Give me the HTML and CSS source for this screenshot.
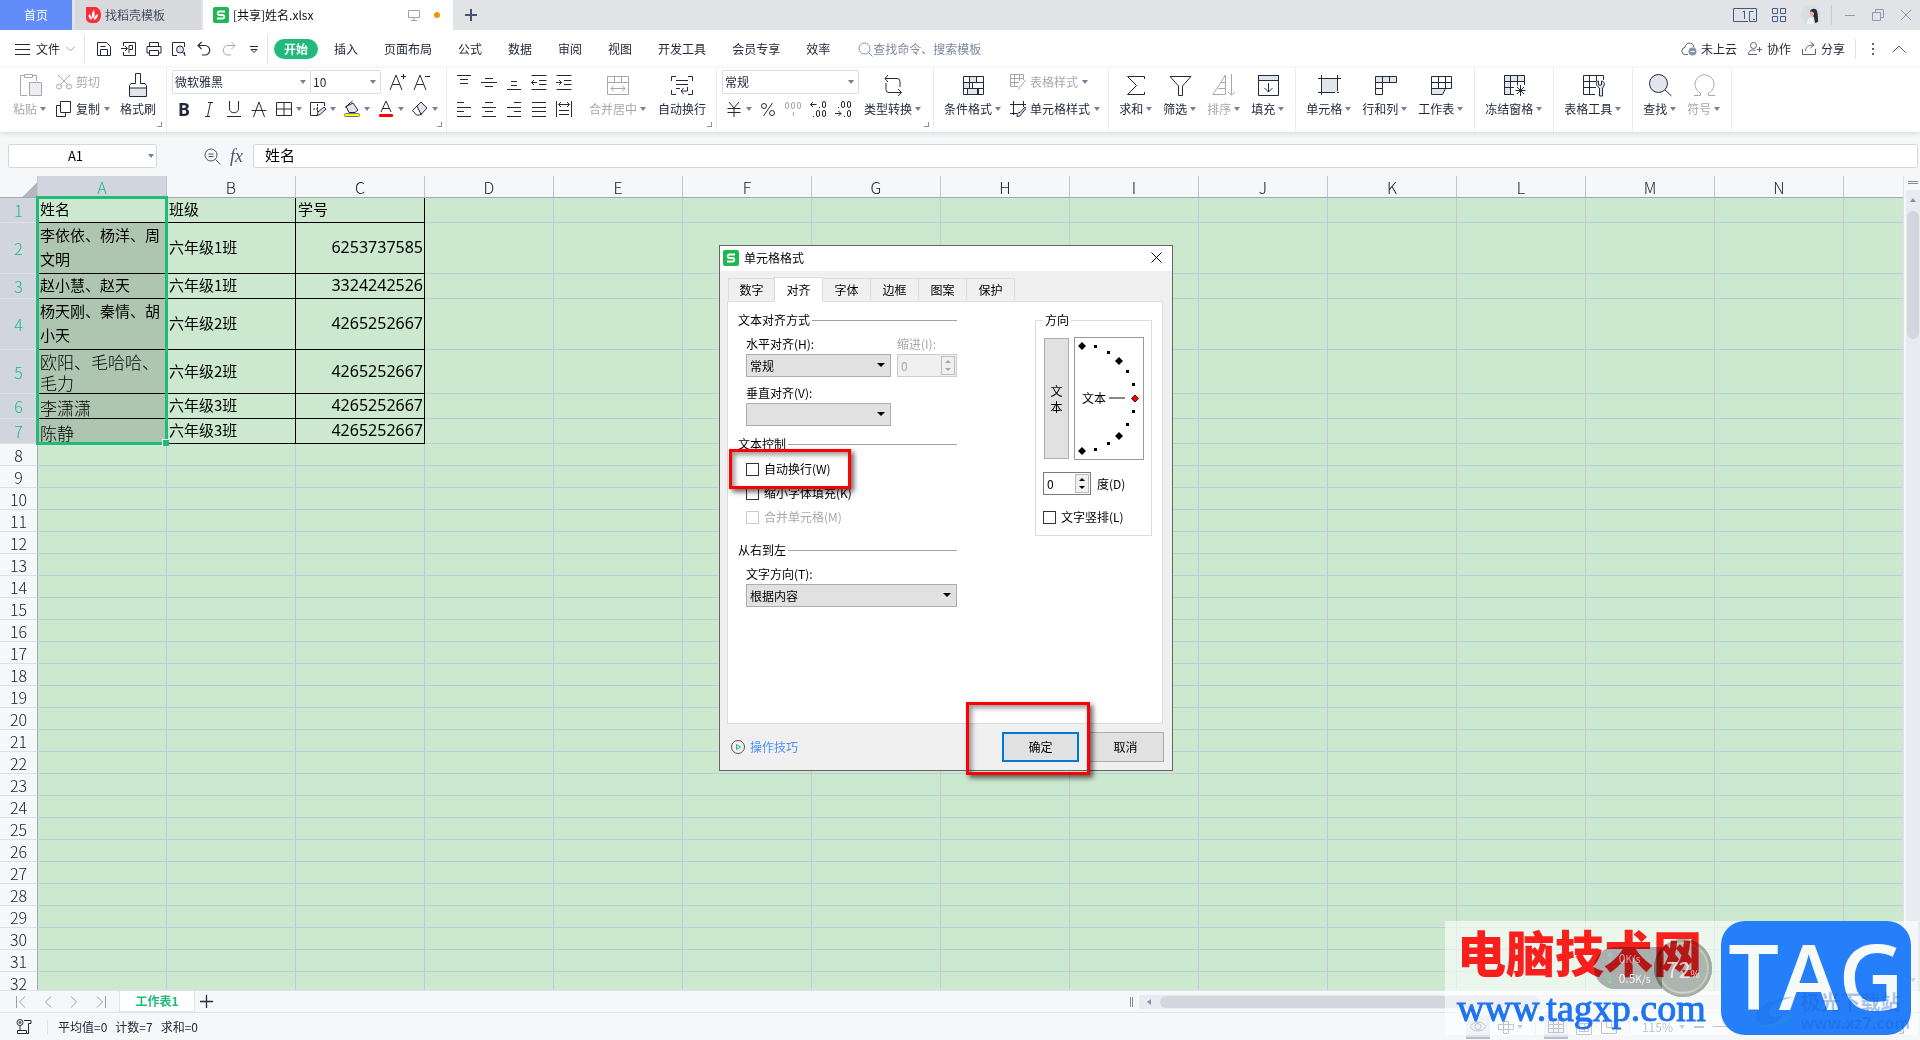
FILE: index.html
```html
<!DOCTYPE html>
<html lang="zh-CN">
<head>
<meta charset="utf-8">
<title>[共享]姓名.xlsx</title>
<link rel="stylesheet" href="styles.css">
</head>
<body>
<div class="app">

<header class="titlebar">
  <button class="tab tab-home">首页</button>
  <button class="tab tab-docer">
    <svg class="logo" viewBox="0 0 16 16"><path d="M1 0h9a6 8 0 0 1 0 16H6a5 5 0 0 1-5-5z" fill="#fb2b37"/><path d="M7 13C4 12 3 10 4 7c2 1 3 3 3 6M8 12C6 8 7 5 9 3c1 3 1 6-1 9M9 13c0-3 1-5 4-6 0 3-1 5-4 6" fill="#fff"/></svg>
    找稻壳模板</button>
  <button class="tab tab-file">
    <svg class="logo" viewBox="0 0 16 16"><rect width="16" height="16" rx="2" fill="#1eb853"/><path d="M12 4.500H6.500a1.700 1.700 0 0 0 0 3.500h3a1.700 1.700 0 0 1 0 3.500H4" fill="none" stroke="#fff" stroke-width="1.800"/></svg>
    <span class="grow">[共享]姓名.xlsx</span>
    <svg class="s12 muted" viewBox="0 0 12 12"><path d="M.5 1.500h11v7H.5zM6 8.500v3M3 11.500h6"/></svg>
    <i class="dot"></i></button>
  <button class="tab-new" aria-label="新建"><svg class="s12" viewBox="0 0 12 12"><path d="M6 0v12M0 6h12" stroke-width="2"/></svg></button>
  <span class="grow"></span>
  <div class="win">
    <svg width="24" height="14" viewBox="0 0 24 14"><path d="M15 13.500H.5V.5h23v13H16.500V3.500h4M9.500 4l2-1v8M20 11.500h2"/></svg>
    <svg width="14" height="14" viewBox="0 0 14 14"><path d="M.5.500h5v5h-5zM8.500.5h5v5h-5zM.5 8.500h5v5h-5zM8.500 8.500h5v5h-5z"/></svg>
    <svg width="20" height="20" viewBox="0 0 20 20" class="avatar"><circle cx="10" cy="10" r="10" fill="#d3dfe4"/><path d="M9 6c2-3 6-3 7 0s1 7 1 11l-3 1-1-6-3-2z" fill="#33272b"/><path d="M9 7c2-1 4 0 4 2s-2 3-3 2z" fill="#e6b9a5"/><path d="M6 19c0-5 3-7 6-6l1 6z" fill="#eef2f4"/></svg>
    <i class="wsep"></i>
    <svg class="s12 pale" viewBox="0 0 12 12"><path d="M1 6.500h10"/></svg>
    <svg class="s12 pale" viewBox="0 0 12 12"><path d="M.5 3.500h8v8h-8zM3.500 3V.5h8v8H9"/></svg>
    <svg class="s12 pale" viewBox="0 0 12 12"><path d="M1 1l10 10M11 1L1 11"/></svg>
  </div>
</header>

<nav class="menubar">
  <button class="file"><svg width="15" height="12" viewBox="0 0 15 12"><path d="M0 1.500h15M0 6.500h15M0 11.500h15"/></svg>文件<svg width="9" height="6" class="muted" viewBox="0 0 9 6"><path d="M0 .5l4.500 4.500L9 .5"/></svg></button>
  <i class="sep"></i>
  <div class="quick">
    <button aria-label="保存"><svg class="s16" viewBox="0 0 16 16"><path d="M1.500 1.500h9l4 4v9h-13zM4.500 14V8.500h7V14M4.500 5.500h5"/></svg></button>
    <button aria-label="输出为PDF"><svg class="s16" viewBox="0 0 16 16"><path d="M2.500 5V1.500h12v13h-12V11M0 7.500h6M4 5l2.500 2.500L4 10M8 12V4.500h3.500v4H8"/></svg></button>
    <button aria-label="打印"><svg class="s16" viewBox="0 0 16 16"><path d="M3.500 5V1.500h9V5M3.500 12H1V5.500h14V12h-2.500M3.500 9.500h9v5h-9z"/></svg></button>
    <button aria-label="打印预览"><svg class="s16" viewBox="0 0 16 16"><path d="M6 14.500H1.500v-13h12V6M13.500 11v3.500"/><circle cx="9" cy="8.500" r="3.500" fill="#dfe3ec"/><path d="M11.500 11l3 3.500"/></svg></button>
    <button aria-label="撤销"><svg class="s16" viewBox="0 0 16 16"><path d="M5.500 1L2 4.500 5.500 8M2 4.500h7a4.500 4.500 0 0 1 0 9.500H6" stroke-width="1.200"/></svg></button>
    <button aria-label="恢复" class="off"><svg class="s16" viewBox="0 0 16 16"><path d="M10.500 1L14 4.500 10.500 8M14 4.500H7a4.500 4.500 0 0 0 0 9.500h3"/></svg></button>
    <button aria-label="更多"><svg class="s16" viewBox="0 0 16 16"><path d="M4 5.500h8M5 8.500l3 3 3-3z"/></svg></button>
  </div>
  <i class="sep"></i>
  <button class="pill">开始</button>
  <div class="menus">
    <button>插入</button><button>页面布局</button><button>公式</button><button>数据</button><button>审阅</button><button>视图</button><button>开发工具</button><button>会员专享</button><button>效率</button>
  </div>
  <label class="search"><svg width="15" height="15" viewBox="0 0 15 15"><circle cx="6.500" cy="6.500" r="5.500"/><path d="M10.500 10.500l4 4"/></svg><input placeholder="查找命令、搜索模板" aria-label="查找命令"></label>
  <span class="grow"></span>
  <div class="share">
    <button><svg class="s16" viewBox="0 0 16 16"><path d="M7 13.500H4.500a3.500 3.500 0 0 1-.5-7 4.500 4.500 0 0 1 9 0"/><circle cx="11.500" cy="10.500" r="4" fill="#8b94a8" stroke="none"/><path d="M9.500 10.500h4" stroke="#fff"/></svg>未上云</button>
    <button><svg class="s16" viewBox="0 0 16 16"><circle cx="6.500" cy="4.500" r="3"/><path d="M10 13.500H1.500c0-3 1.500-4.500 4-4.500 1 0 2 0 3 .5M12.500 6v5M10 8.500h5"/></svg>协作</button>
    <button><svg class="s16" viewBox="0 0 16 16"><path d="M1.500 8v5.500h13V8M4.500 10c0-4 3-6 8-6M9.500 1l3.500 3-3.500 3"/></svg>分享</button>
    <i class="sep"></i>
    <svg width="4" height="14" viewBox="0 0 4 14" class="dots"><path d="M1 1h2v2H1zM1 6h2v2H1zM1 11h2v2H1z"/></svg>
    <svg width="14" height="8" viewBox="0 0 14 8"><path d="M.5 7.500L7 1l6.500 6.500"/></svg>
  </div>
</nav>

<section class="ribbon">
  <div class="group g-clip">
    <button class="big off"><svg class="s24" viewBox="0 0 24 24"><path d="M9 22.500H2.500v-20H6M15 2.500h3.500V8M6.500 1.500h8v3h-8z"/><path d="M11.500 9.500h12v13h-12z" fill="#eceef2"/></svg><span>粘贴<b class="ar"></b></span></button>
    <div class="two clipcol">
      <button class="line off"><svg class="s16" viewBox="0 0 16 16"><circle cx="3" cy="12.500" r="2.500"/><circle cx="13" cy="12.500" r="2.500"/><path d="M2 1l9.500 9.500M14 1l-9.500 9.500"/></svg>剪切</button>
      <button class="line"><svg class="s16" viewBox="0 0 16 16"><path d="M4.500.500h10v11h-10zM4 4.500H.5v11h9V12"/></svg>复制<b class="ar"></b></button>
    </div>
    <button class="big"><svg class="s24" viewBox="0 0 24 24"><path d="M3.500 15v8.500h17V15z" fill="#e2e5ec"/><path d="M3.500 15v-2.500L5 10.500h4.500V.5h5v10H19l1.500 2V15"/></svg><span>格式刷</span></button>
    <i class="corner"></i>
  </div>

  <div class="group g-font">
    <div class="two">
      <div class="row">
        <div class="joined"><span class="sel w-font"><select aria-label="字体"><option>微软雅黑</option></select></span><span class="sel w-size"><select aria-label="字号"><option>10</option></select></span></div>
        <div class="row sized">
        <button aria-label="增大字号"><svg class="s18" viewBox="0 0 18 18"><path d="M1 17L7 2l6 15M3.500 11.500h7M12 3.500h5M14.500 1v5"/></svg></button>
        <button aria-label="减小字号"><svg class="s18" viewBox="0 0 18 18"><path d="M1 17L7 2l6 15M3.500 11.500h7M12 3.500h5"/></svg></button></div>
      </div>
      <div class="row tools">
        <button class="bold">B</button>
        <button aria-label="斜体"><svg class="s18" viewBox="0 0 18 18"><path d="M8 2.500h5M5 16.500h5M10.500 2.500l-3 14"/></svg></button>
        <button aria-label="下划线"><svg class="s18" viewBox="0 0 18 18"><path d="M4.500 1v8c0 5 9 5 9 0V1M2 16.500h14"/></svg></button>
        <button aria-label="删除线"><svg class="s18" viewBox="0 0 18 18"><path d="M3.500 17L9 2l5.500 15M1.500 10.500h15"/></svg></button>
        <button class="dd" aria-label="边框"><svg class="s18" viewBox="0 0 18 18"><path d="M1.500 2.500h15v13h-15zM9 2.500v13M1.500 9h15"/></svg><b class="ar"></b></button>
        <button class="dd" aria-label="绘图边框"><svg class="s18" viewBox="0 0 18 18"><path d="M8 15.500H1.500v-13h14V6"/><path d="M4 9h6M8.500 4v8" stroke-dasharray="2 1"/><path d="M8 15.500l1-3.500 6-5 2 2-6 5.500z" fill="#e2e5ec"/></svg><b class="ar"></b></button>
        <button class="dd" aria-label="填充颜色"><svg class="s18" viewBox="0 0 18 18"><path d="M3 6.500L10 3l5 7-3 2.500H6z" fill="#e2e5ec"/><path d="M2 7.500L9.500 1"/><rect x="1.500" y="13.500" width="15" height="3" rx="1" fill="#ff0" stroke="#777"/></svg><b class="ar"></b></button>
        <button class="dd" aria-label="字体颜色"><svg class="s18" viewBox="0 0 18 18"><path d="M4 12L9 1l5 11M5.500 8.500h7"/><rect x="2" y="14" width="14" height="3" rx="1" fill="red" stroke="none"/></svg><b class="ar"></b></button>
        <button class="dd" aria-label="清除"><svg class="s18" viewBox="0 0 18 18"><path d="M6 6l4-4 6 6-6 6.500z" fill="#e2e5ec"/><path d="M6 6l-4.500 4.500 4 4.500H9l2-1.500"/></svg><b class="ar"></b></button>
      </div>
    </div>
    <i class="corner"></i>
  </div>

  <div class="group g-align">
    <div class="two">
      <div class="row tools0">
        <button aria-label="顶端对齐"><svg class="s18" viewBox="0 0 18 18"><path d="M2 2.500h14M5 6.500h8M5 10.500h8"/></svg></button>
        <button aria-label="垂直居中"><svg class="s18" viewBox="0 0 18 18"><path d="M5 5.500h8M1 9.500h16M5 13.500h8"/></svg></button>
        <button aria-label="底端对齐"><svg class="s18" viewBox="0 0 18 18"><path d="M6 8.500h6M6 12.500h6M2 16.500h14"/></svg></button>
        <button aria-label="减少缩进"><svg class="s18" viewBox="0 0 18 18"><path d="M1.500 2.500h15M9 7.500h7.500M9 11.500h7.500M1.500 16.500h15M1.500 9.500H7M4 7L1.500 9.500 4 12"/></svg></button>
        <button aria-label="增加缩进"><svg class="s18" viewBox="0 0 18 18"><path d="M1.500 2.500h15M9 7.500h7.500M9 11.500h7.500M1.500 16.500h15M1 9.500h5.500M4 7l2.500 2.500L4 12"/></svg></button>
      </div>
      <div class="row tools0">
        <button aria-label="左对齐"><svg class="s18" viewBox="0 0 18 18"><path d="M2 2.500h7M2 7.500h14M2 11.500h7M2 16.500h14"/></svg></button>
        <button aria-label="居中"><svg class="s18" viewBox="0 0 18 18"><path d="M5 2.500h8M2 7.500h14M5 11.500h8M2 16.500h14"/></svg></button>
        <button aria-label="右对齐"><svg class="s18" viewBox="0 0 18 18"><path d="M9 2.500h7M2 7.500h14M9 11.500h7M2 16.500h14"/></svg></button>
        <button aria-label="两端对齐"><svg class="s18" viewBox="0 0 18 18"><path d="M2 2.500h14M2 7.500h14M2 11.500h14M2 16.500h14"/></svg></button>
        <button aria-label="分散对齐"><svg class="s18" viewBox="0 0 18 18"><path d="M1.500 1v16M16.500 1v16M4 4.500h10M6 2L3.500 4.500 6 7M12 2l2.500 2.500L12 7M4 10.500h10M4 14.500h10"/></svg></button>
      </div>
    </div>
    <button class="big off"><svg class="s24" viewBox="0 0 24 24"><path d="M1.500 3.500h21v18h-21zM1.500 9.500h21M8.500 3.500v6M15.500 3.500v6M5 15.500h14M8 12.500l-3 3 3 3M16 12.500l3 3-3 3"/></svg><span>合并居中<b class="ar"></b></span></button>
    <button class="big"><svg class="s24" viewBox="0 0 24 24"><path d="M6 3.500H1.500V8M18 3.500h4.500V8M1.500 17v4.500H6M22.500 17v4.500H18M6 7.500h12M6 11.500h12M6 15.500h4M17.500 14v4H11M13.500 15L11 18l2.500 3"/></svg><span>自动换行</span></button>
    <i class="corner"></i>
  </div>

  <div class="group g-num">
    <div class="two">
      <div class="row"><span class="sel w-num"><select aria-label="数字格式"><option>常规</option></select></span></div>
      <div class="row tools">
        <button class="dd" aria-label="货币"><svg class="s18" viewBox="0 0 18 18"><path d="M4 2l5 6 5-6M2.500 8.500h13M2.500 12.500h13M9 8v9"/></svg><b class="ar"></b></button>
        <button aria-label="百分比"><svg class="s18" viewBox="0 0 18 18"><circle cx="5" cy="6" r="2.500"/><circle cx="13" cy="13" r="2.500"/><path d="M13.500 3l-9 13"/></svg></button>
        <button class="off" aria-label="千位分隔"><svg class="s18" viewBox="0 0 18 18"><rect x="1.500" y="2.500" width="3" height="6" rx="1.500"/><rect x="7.500" y="2.500" width="3" height="6" rx="1.500"/><rect x="13.500" y="2.500" width="3" height="6" rx="1.500"/><path d="M9.500 12v3L8.500 16"/></svg></button>
        <button aria-label="增加小数位"><svg class="s18" viewBox="0 0 18 18"><rect x="13.500" y="1.500" width="3" height="6" rx="1.500"/><path d="M10.500 7v1M1.500 4.500h6M4 2L1.500 4.500 4 7M4.500 16v1"/><rect x="7.500" y="10.500" width="3" height="6" rx="1.500"/><rect x="13.500" y="10.500" width="3" height="6" rx="1.500"/></svg></button>
        <button aria-label="减少小数位"><svg class="s18" viewBox="0 0 18 18"><rect x="7.500" y="1.500" width="3" height="6" rx="1.500"/><rect x="13.500" y="1.500" width="3" height="6" rx="1.500"/><path d="M4.500 7v1M1 13.500h6M4.500 11L7 13.500 4.500 16M10.500 16v1"/><rect x="13.500" y="10.500" width="3" height="6" rx="1.500"/></svg></button>
      </div>
    </div>
    <button class="big"><svg class="s24" viewBox="0 0 24 24"><path d="M7 2L4 5.500 7 9M4 5.500h12a3 3 0 0 1 3 3V14M5 10v6.500a3 3 0 0 0 3 3h12M17 16l3.500 3.500L17 23"/></svg><span>类型转换<b class="ar"></b></span></button>
    <i class="corner"></i>
  </div>

  <div class="group g-style">
    <button class="big"><svg class="s24" viewBox="0 0 24 24"><path d="M2.500 9.500h6v6h-6zM8.500 3.500h7v6h-7zM6.500 15.500h10v6h-10z" fill="#e2e5ec"/><path d="M2.500 3.500h20v18h-20zM2.500 9.500h20M2.500 15.500h20M15.500 3.500v6M11.500 9.500v6M17.500 15.500v6"/></svg><span>条件格式<b class="ar"></b></span></button>
    <div class="two">
      <button class="line off"><svg class="s16" viewBox="0 0 16 16"><path d="M8 12.500H.5V.5h13V6M.5 4.500h13M.5 8.500H9M4.500.500v12M9.500.5V7M9 15.500c0-3 1-3.500 2-3.500l4.500-6"/></svg>表格样式<b class="ar"></b></button>
      <button class="line"><svg class="s16" viewBox="0 0 16 16"><path d="M3.500 0v14M0 3.500h16M13.500 0v6M0 12.500h7"/><path d="M7 15.500c0-3 1-4 3-4L15 6l1 1.500-5 6c0 1.500-2 2-4 2z" fill="#e2e5ec"/></svg>单元格样式<b class="ar"></b></button>
    </div>
  </div>

  <div class="group">
    <button class="big"><svg class="s24" viewBox="0 0 24 24"><path d="M20.500 6V3.500h-17l9 9-9 9h17V19"/></svg><span>求和<b class="ar"></b></span></button>
    <button class="big"><svg class="s24" viewBox="0 0 24 24"><path d="M2 3.500h21L14.500 13v9.500h-4V13z"/></svg><span>筛选<b class="ar"></b></span></button>
    <button class="big off"><svg class="s24" viewBox="0 0 24 24"><path d="M1 21.500L13.500 2v19.500zM9 9.500h4.500M6 15.500h7.500M19.500 1v21M16 19l3.500 3 3.500-3"/></svg><span>排序<b class="ar"></b></span></button>
    <button class="big"><svg class="s24" viewBox="0 0 24 24"><path d="M2.500 2.500h20v5h-20z" fill="#e2e5ec"/><path d="M2.500 2.500h20v20h-20zM12.500 10v9M8.500 15l4 4 4-4"/></svg><span>填充<b class="ar"></b></span></button>
  </div>

  <div class="group">
    <button class="big"><svg class="s24" viewBox="0 0 24 24"><path d="M4 5.500h17v14H4z" fill="#e2e5ec" stroke="none"/><path d="M4.500 2v20M20.500 2v16M1 5.500h23M1 19.500h17M20 19.500h2"/></svg><span>单元格<b class="ar"></b></span></button>
    <button class="big"><svg class="s24" viewBox="0 0 24 24"><path d="M2.500 3.500h21v6h-21z" fill="#e2e5ec"/><path d="M2.500 9.500v12h7v-18M16.500 3.500v6M2.500 15.500h7"/></svg><span>行和列<b class="ar"></b></span></button>
    <button class="big"><svg class="s24" viewBox="0 0 24 24"><path d="M2.500 15.500h14l-3 6h-11z" fill="#e2e5ec"/><path d="M2.500 3.500h20v12h-20zM2.500 9.500h20M9.500 3.500v12M16.500 3.500v12"/></svg><span>工作表<b class="ar"></b></span></button>
  </div>

  <div class="group">
    <button class="big"><svg class="s24" viewBox="0 0 24 24"><path d="M2.500 2.500h20v6h-14v13h-6z" fill="#e2e5ec"/><path d="M22.500 12V2.500h-20v19H12M2.500 8.500h20M2.500 14.500H12M8.500 2.500v19M15.500 2.500v10M18.500 12v11M13.500 17.500h10M15 14l7 7M22 14l-7 7"/></svg><span>冻结窗格<b class="ar"></b></span></button>
  </div>
  <div class="group">
    <button class="big"><svg class="s24" viewBox="0 0 24 24"><path d="M22.500 7V2.500h-20v19H14M2.500 8.500H15M2.500 14.500H15M8.500 2.500v19M15.500 2.500v6"/><path d="M18.500 23v-8c-5-3-3-7-1-7v4h3V8c3 0 4 4 1 7v8z" fill="#e2e5ec"/></svg><span>表格工具<b class="ar"></b></span></button>
  </div>
  <div class="group">
    <button class="big"><svg class="s24" viewBox="0 0 24 24"><circle cx="10.500" cy="10.500" r="9" fill="#e2e5ec"/><path d="M17 17l6.500 6"/></svg><span>查找<b class="ar"></b></span></button>
    <button class="big off"><svg class="s24" viewBox="0 0 24 24"><path d="M2 22.500h6.500V20a9.500 9.500 0 1 1 8 0v2.500H23"/></svg><span>符号<b class="ar"></b></span></button>
  </div>
</section>

<section class="formula">
  <span class="sel name"><input value="A1" aria-label="名称框"></span>
  <span class="fxs"><svg width="17" height="17" viewBox="0 0 17 17"><circle cx="7" cy="7" r="6"/><path d="M11.500 11.500l5 5M4.500 6h5M4.500 8.500h5"/></svg><em>fx</em></span>
  <input class="fin" value="姓名" aria-label="编辑栏">
</section>

<main class="sheet">
  <div class="gridwrap">
    <table class="grid">
      <colgroup><col class="c-head"><col class="c"><col class="c"><col class="c"><col class="c"><col class="c"><col class="c"><col class="c"><col class="c"><col class="c"><col class="c"><col class="c"><col class="c"><col class="c"><col class="c"><col></colgroup>
      <thead><tr><th class="all"></th><th class="on">A</th><th>B</th><th>C</th><th>D</th><th>E</th><th>F</th><th>G</th><th>H</th><th>I</th><th>J</th><th>K</th><th>L</th><th>M</th><th>N</th><th class="end"></th></tr></thead>
      <tbody id="rows">
        <tr class="h25"><th>1</th><td class="d">姓名</td><td class="d">班级</td><td class="d">学号</td></tr>
        <tr class="h51"><th>2</th><td class="d s">李依依、杨洋、周文明</td><td class="d">六年级1班</td><td class="d n">6253737585</td></tr>
        <tr class="h25"><th>3</th><td class="d s">赵小慧、赵天</td><td class="d">六年级1班</td><td class="d n">3324242526</td></tr>
        <tr class="h51"><th>4</th><td class="d s">杨天刚、秦情、胡小天</td><td class="d">六年级2班</td><td class="d n">4265252667</td></tr>
        <tr class="h44"><th>5</th><td class="d s song">欧阳、毛哈哈、毛力</td><td class="d">六年级2班</td><td class="d n">4265252667</td></tr>
        <tr class="h25"><th>6</th><td class="d s song">李潇潇</td><td class="d">六年级3班</td><td class="d n">4265252667</td></tr>
        <tr class="h25"><th>7</th><td class="d s song">陈静</td><td class="d">六年级3班</td><td class="d n">4265252667</td></tr>
      </tbody>
    </table>
    <div class="selection"></div>
  </div>
  <div class="vscroll"><i class="split"></i><div class="vtrack"><b class="up"></b><i class="vthumb"></i><span class="grow"></span><b class="down"></b></div></div>
</main>

<div class="sheetbar">
  <div class="navs">
    <svg width="10" height="12" viewBox="0 0 10 12"><path d="M.5 0v12M9 .5L3.500 6 9 11.500"/></svg>
    <svg width="8" height="12" viewBox="0 0 8 12"><path d="M7 .5L1.500 6 7 11.500"/></svg>
    <svg width="8" height="12" viewBox="0 0 8 12"><path d="M1 .5L6.500 6 1 11.500"/></svg>
    <svg width="10" height="12" viewBox="0 0 10 12"><path d="M9.500 0v12M1 .5L6.500 6 1 11.500"/></svg>
  </div>
  <button class="sheettab">工作表1</button>
  <button class="addsheet" aria-label="新建工作表"><svg width="13" height="13" viewBox="0 0 13 13"><path d="M6.500 0v13M0 6.500h13" stroke-width="1.300"/></svg></button>
  <span class="grow"></span>
  <div class="hscroll"><i class="bars"></i><div class="htrack"><b class="prev"></b><i class="hthumb"></i></div></div>
</div>

<footer class="status">
  <svg class="s16" viewBox="0 0 16 16"><circle cx="4" cy="3.500" r="3"/><circle cx="4" cy="3.500" r="1"/><path d="M8 1.500h7v3h-2.500V13M4 7v4M1.500 11.500h9v3h-9zM12.500 8v6.500h-2"/></svg>
  <i class="sep"></i>
  <span>平均值=0</span><span>计数=7</span><span>求和=0</span>
  <span class="grow"></span>
  <div class="views">
    <button class="lit" aria-label="护眼模式"><svg class="s16" viewBox="0 0 16 16"><path d="M0 8.500c4-6 12-6 16 0-4 6-12 6-16 0z"/><circle cx="8" cy="8.500" r="3"/></svg></button>
    <button class="dd" aria-label="阅读模式"><svg class="s16" viewBox="0 0 16 16"><path d="M5.500 2.500h5v12h-5zM.5 5.500h15v5H.5z"/></svg><b class="ar"></b></button>
    <i class="sep"></i>
    <button class="lit" aria-label="普通视图"><svg class="s16" viewBox="0 0 16 16"><path d="M.5 2.500h15v12H.5zM.5 6.500h15M.5 10.500h15M5.500 2.500v12M10.500 2.500v12"/></svg></button>
    <button aria-label="页面布局"><svg class="s16" viewBox="0 0 16 16"><path d="M.5 1.500h15v14H.5zM3.500 4.500h9v8h-9zM3.500 8.500h9M8.500 4.500v8"/></svg></button>
    <button aria-label="分页预览"><svg class="s16" viewBox="0 0 16 16"><path d="M.5 2.500h15v12H.5zM5.500 2.500v6h10M10.500 2.500v6"/></svg></button>
    <i class="sep"></i>
    <span class="zoomv">115%<b class="ar"></b></span>
    <svg width="10" height="10" viewBox="0 0 10 10"><path d="M0 5h10" stroke-width="2"/></svg>
    <input type="range" class="zoom" min="10" max="200" value="106" aria-label="缩放">
    <svg class="plus" width="10" height="10" viewBox="0 0 10 10"><path d="M0 5h10M5 0v10" stroke-width="2"/></svg>
    <svg width="14" height="14" viewBox="0 0 14 14"><path d="M.5 5V.5H5M9 .5h4.500V5M.5 9v4.500H5M13.500 9v4.500H9M1 1l4 4M13 1L9 5M1 13l4-4M13 13L9 9"/></svg>
  </div>
</footer>
</div>

<div class="dialog" role="dialog" aria-label="单元格格式">
  <div class="dtitle">
    <svg class="logo" viewBox="0 0 16 16"><rect width="16" height="16" rx="2" fill="#1eb853"/><path d="M12 4.500H6.500a1.700 1.700 0 0 0 0 3.500h3a1.700 1.700 0 0 1 0 3.500H4" fill="none" stroke="#fff" stroke-width="1.800"/></svg>
    <span class="grow">单元格格式</span>
    <button aria-label="关闭"><svg width="11" height="11" viewBox="0 0 11 11"><path d="M.5.5l10 10M10.500.5l-10 10"/></svg></button>
  </div>
  <div class="dtabs"><button>数字</button><button class="cur">对齐</button><button>字体</button><button>边框</button><button>图案</button><button>保护</button></div>
  <div class="panel">
    <div class="settings">
      <h3>文本对齐方式</h3>
      <div class="pair">
        <div class="field narrow"><label for="ha">水平对齐(H):</label><span class="dsel"><select id="ha"><option>常规</option></select></span></div>
        <div class="field indent off"><label for="ind">缩进(I):</label><span class="spin ind"><input id="ind" value="0" disabled><i class="ud"></i></span></div>
      </div>
      <div class="field narrow"><label for="va">垂直对齐(V):</label><span class="dsel"><select id="va"><option></option></select></span></div>
      <h3 class="ctl">文本控制</h3>
      <div class="checks">
        <label><input type="checkbox">自动换行(W)</label>
        <label><input type="checkbox">缩小字体填充(K)</label>
        <label class="off"><input type="checkbox" disabled>合并单元格(M)</label>
      </div>
      <h3>从右到左</h3>
      <div class="field"><label for="td">文字方向(T):</label><span class="dsel"><select id="td"><option>根据内容</option></select></span></div>
    </div>
    <fieldset class="orient">
      <legend>方向</legend>
      <div class="dials">
        <button class="vert">文<br>本</button>
        <svg class="dial" viewBox="0 0 70 123"><rect x=".5" y=".5" width="69" height="122" fill="#fff" stroke="#999"/>
          <path d="M35 61h16" stroke="#888" stroke-width="2"/>
          <g fill="#000" stroke="none"><path d="M8 5l4 4-4 4-4-4zM45 20l4 4-4 4-4-4zM45 95l4 4-4 4-4-4zM8 110l4 4-4 4-4-4z"/><path d="M20 8h3v3h-3zM33 14h3v3h-3zM52 33h3v3h-3zM58 46h3v3h-3zM58 73h3v3h-3zM52 86h3v3h-3zM33 105h3v3h-3zM20 111h3v3h-3z"/></g>
          <path d="M61 58l3.500 3.500L61 65l-3.500-3.500z" fill="red" stroke="#400"/>
          <text x="8" y="66">文本</text></svg>
      </div>
      <label class="deg"><span class="spin"><input value="0"><i class="ud"></i></span>度(D)</label>
      <label class="vtext"><input type="checkbox">文字竖排(L)</label>
    </fieldset>
  </div>
  <div class="dfoot">
    <svg width="14" height="14" viewBox="0 0 14 14"><circle cx="7" cy="7" r="6.500" stroke="#555"/><path d="M5.500 4.500l4 2.500-4 2.500z" stroke="#1fbb7d"/></svg>
    <a href="#tips">操作技巧</a><span class="grow"></span>
    <button class="ok">确定</button><button class="cancel">取消</button>
  </div>
  <div class="mark mark-wrap"></div>
  <div class="mark mark-ok"></div>
</div>

<div class="brand">
  <div class="words"><span class="cn">电脑技术网</span><span class="url">www.tagxp.com</span></div>
  <div class="tag">TAG</div>
</div>
<div class="speed"><span class="upc">↑ <b>0</b><small>K/s</small></span><span class="dnc">↓ <b>0.5</b><small>K/s</small></span></div>
<div class="gauge"><span>72<small>%</small></span></div>
<div class="brand2"><svg width="42" height="32" viewBox="0 0 42 32"><path d="M2 26C-2 14 16 2 40 2 22 6 12 14 16 20c5 5 14 0 14-4-4 14-20 18-28 10z" fill="#1672dd" stroke="none"/><path d="M6 29c12 3 24-2 34-16-2 12-18 24-34 16z" fill="#2a9ac0" stroke="none"/></svg><div><span class="b2cn">极光下载站</span><span class="b2url">www.xz7.com</span></div></div>
<script src="app.js"></script>
</body>
</html>
```
FILE: styles.css
```css
*{box-sizing:border-box}
body{margin:0;font:12px/16px "Noto Sans CJK SC",sans-serif;color:#232a3b;background:#f6f7f9}
button,input,select{font:inherit;color:inherit;background:none;border:0;padding:0;margin:0;border-radius:0;outline:0}
button{white-space:nowrap}
select{appearance:none;width:100%;height:100%}
i{font-style:normal}
svg{fill:none;stroke:currentColor;flex:none;display:block}
.grow{flex:1;text-align:left}
.s12{width:12px;height:12px}.s16{width:16px;height:16px}.s18{width:18px;height:18px}.s24{width:24px;height:24px}
.logo{width:16px;height:16px;stroke:none}
.muted{color:#9aa3b5}
.off{color:#a6a8ab}
.app{height:100vh;display:flex;flex-direction:column;overflow:hidden}
.sep{width:1px;height:28px;background:#dfe1e6}

/* title bar */
.titlebar{height:30px;display:flex;background:#e2e3e7;flex:none}
.tab{display:flex;align-items:center;gap:4px}
.tab-home{width:72px;background:#608dfa;color:#fff;justify-content:center;margin-right:3px}
.tab-docer{width:126px;background:#d8d9dc;padding-left:10px;margin-right:2px;color:#444c5e}
.tab-file{width:250px;background:#fff;padding:0 13px 0 10px;color:#111}
.dot{width:6px;height:6px;border-radius:50%;background:#e79b07;margin-left:10px}
.tab-new{width:36px;display:flex;align-items:center;justify-content:center;color:#44526f}
.win{display:flex;align-items:center;gap:15px;padding-right:7px;color:#445a85}
.avatar{stroke:none}
.win .pale{color:#8c9ab8;margin-right:1px}
.wsep{width:1px;height:20px;background:#c6c9d0;margin-left:-5px;margin-right:-3px}

/* menu */
.menubar{height:38px;display:flex;align-items:center;background:#fff;flex:none;padding-right:14px}
.file{display:flex;align-items:center;gap:6px;padding:0 9px 0 15px}
.quick{display:flex;gap:9px;padding:0 5px 0 11px}
.pill{width:44px;height:20px;border-radius:10px;background:#21ba7b;color:#fff;font-weight:700;margin:0 16px 0 6px}
.menus{display:flex;gap:26px}
.search{display:flex;align-items:center;margin-left:28px;color:#8791a8}
.search input{width:140px}
.search input::placeholder{color:#7d879d;opacity:1}
.share{display:flex;align-items:center;gap:10px}
.share button{display:flex;gap:4px;align-items:center}
.share button svg,.share>svg{color:#566079}
.share .sep{height:20px;margin-right:5px}
.share .dots{fill:#566079;stroke:none;margin-right:7px}

/* ribbon */
.ribbon{height:64px;display:flex;background:#fff;flex:none;box-shadow:0 1px 5px rgba(0,0,0,.14);position:relative}
.group{position:relative;display:flex;align-items:flex-start;gap:11px;padding:2px 11px 0 10px;border-right:1px solid #ebecef;flex:none}
.big{display:flex;flex-direction:column;align-items:center;gap:4px;padding-top:3px}
.big span{display:flex;align-items:center;gap:3px}
.ar{width:0;height:0;border:3px solid transparent;border-top:4px solid #76809a;border-bottom:0}
.two{display:flex;flex-direction:column;gap:4px}
.row{display:flex;align-items:center;height:24px}
.row+.row{height:22px}
.tools{gap:7px;padding-left:3px}
.tools0{gap:7px}
.dd{display:flex;align-items:center;gap:3px}
.line{display:flex;align-items:center;gap:4px;height:24px}
.line+.line{height:22px}
.g-clip{padding-left:13px;padding-right:10px;gap:10px}
.g-font{padding-left:5px;padding-right:8px}
.g-align{padding-left:8px;padding-right:10px;gap:12px}
.g-align .two{margin-right:4px}
.g-num{padding-left:5px;gap:5px;padding-right:12px}
.g-style{padding-right:8px;gap:9px}
.sized{gap:6px;padding-left:8px}
.bold{width:18px;font:700 18px/22px "Noto Sans",sans-serif}
.corner{position:absolute;right:4px;bottom:5px;width:5px;height:5px;border:solid #8791a8;border-width:0 1px 1px 0}
.sel{position:relative;display:flex}
.joined{display:flex}
.row .sel{height:24px;border:1px solid #dcdee3;border-radius:2px}
.row .sel select{padding-left:2px}
.w-font{width:139px}.w-size{width:71px;margin-left:-1px}.w-num{width:137px}
.sel::after{content:"";position:absolute;right:4px;top:50%;margin-top:-2px;border:3px solid transparent;border-top:4px solid #76809a;border-bottom:0}

/* formula bar */
.formula{height:44px;padding:12px 2px 8px 8px;display:flex;flex:none}
.formula input{border:1px solid #d5d8de;background:#fff;border-radius:2px}
.name{width:149px}
.name input{width:100%;text-align:center;padding-right:14px;font-size:13px;color:#000}
.name::after{right:3px}
.fxs{width:96px;display:flex;align-items:center;justify-content:flex-end;gap:9px;padding-right:10px;color:#4a556d}
.fxs em{font:italic 18px/20px "Liberation Serif",serif}
.fin{flex:1;padding:0 11px 2px;font-size:15px;color:#000}

/* grid */
.sheet{flex:1;min-height:0;display:flex}
.gridwrap{flex:1;min-width:0;overflow:hidden;position:relative;background:#cce8cf}
.grid{width:100%;table-layout:fixed;border-collapse:separate;border-spacing:0}
.c-head{width:38px}.c{width:129px}
.grid th{font:300 16px/20px "Noto Sans CJK SC",sans-serif;padding:0;color:#222;background:#f6f7f9}
.grid thead th{height:22px;border-right:1px solid #c0c4d4;border-bottom:1px solid #9fa8bc;background:#f6f7f9}
.grid thead .end{border-right:0}
.grid thead .on{background:#d1d5de;color:#1fba7c}
.grid thead .all{background:linear-gradient(135deg,#f6f7f9 74%,#b4b8bd 75%)}
.grid tbody th{border-right:1px solid #9fa8bc;border-bottom:1px solid #dcdfe8}
.grid td{padding:0 1px;border-right:1px solid #c3c9d6;border-bottom:1px solid #c3c9d6;overflow:hidden}
.grid td:last-child{border-right:0}
.h22{height:22px}.h25{height:25px}.h44{height:44px}.h51{height:51px}
.grid .h25 th,.grid .h44 th,.grid .h51 th{background:#d1d5de;color:#1fba7c}
.grid .d{font-size:15px;line-height:22px;padding:0 1px 2px 2px;color:#000;border-color:#000}
.h51 .d.s{line-height:24px}
.grid .s{background:#aec6b0}
.grid .n{text-align:right;font-family:"Noto Sans",sans-serif;font-size:16px}
.grid .song{font-size:17px;line-height:21px;font-weight:300;vertical-align:bottom;padding-bottom:0}
.selection{position:absolute;left:36px;top:20px;width:132px;height:249px;border:3px solid #21ba7b}
.selection::after{content:"";position:absolute;right:-4px;bottom:-4px;width:6px;height:6px;background:#21ba7b;border:solid #fff;border-width:1px 0 0 1px}
.vscroll{width:17px;border-left:1px solid #e0e2e8;display:flex;flex-direction:column}
.split{height:3px;margin:5px 2px 6px 4px;border:solid #7f8aa3;border-width:1px 0}
.vtrack{flex:1;margin-left:2px;background:#e9ebf0;display:flex;flex-direction:column;align-items:center;padding:8px 0}
.vtrack .up{border:3px solid transparent;border-bottom:4px solid #8791a8;border-top:0}
.vthumb{width:12px;height:128px;border-radius:6px;background:#d3d6de;margin-top:9px}
.vtrack .down{border:3px solid transparent;border-top:4px solid #8791a8;border-bottom:0}

/* sheet tabs */
.sheetbar{height:22px;border-top:1px solid #dfe2ea;display:flex;flex:none;align-items:center}
.navs{display:flex;gap:18px;padding-left:16px;color:#9a9da3;width:119px}
.sheettab{width:76px;height:21px;background:#fff;border:1px solid #e0e3ea;border-top:0;color:#21ba7b;font-weight:700}
.addsheet{padding:0 5px}
.hscroll{width:776px;margin-right:14px;display:flex;gap:6px;align-items:center}
.bars{width:3px;height:10px;border:solid #7f8aa3;border-width:0 1px}
.htrack{flex:1;height:14px;background:#e9ebf0;display:flex;align-items:center;padding-left:8px}
.prev{border:3px solid transparent;border-right:4px solid #8791a8;border-left:0}
.hthumb{width:380px;height:12px;border-radius:6px;background:#d3d6de;margin-left:9px}

/* status */
.status{height:28px;border-top:1px solid #dfe2ea;display:flex;align-items:center;flex:none;padding-left:16px}
.status>span{margin-right:8px}
.status>.sep{height:14px;margin:0 10px 0 15px}
.views{display:flex;align-items:center;gap:9px;padding-right:16px;color:#5f6b85}
.views .sep{height:14px;margin:0 3px}
.views button{height:24px;display:flex;align-items:center}
.views .lit{background:#dfe2e8;border-bottom:2px solid #b7bece;padding:0 4px;margin:0 -1px 0 -4px}
.zoomv{display:flex;gap:6px;align-items:center}
.plus{margin-right:4px}
.zoom{appearance:none;width:145px;height:12px}
.zoom::-webkit-slider-runnable-track{height:1px;background:#5f6b85}
.zoom::-webkit-slider-thumb{appearance:none;width:11px;height:11px;margin-top:-5px;border:1px solid #5f6b85;border-radius:50%;background:#f6f7f9}

/* dialog */
.dialog{position:absolute;left:719px;top:245px;width:454px;border:1px solid #646664;background:#f0f0f0;color:#000}
.dtitle{height:25px;background:#fff;display:flex;align-items:center;gap:5px;padding:0 10px 2px 3px}
.dtabs{display:flex;align-items:flex-end;height:31px;padding-left:8px;position:relative;margin-bottom:-1px}
.dtabs button{width:48px;height:24px;border:1px solid #dcdcdc;border-left:0}
.dtabs button:first-child{border-left:1px solid #dcdcdc;border-right:0;width:46px}
.dtabs .cur{height:25px;background:#fff;border-left:1px solid #dcdcdc;border-bottom-color:#fff;width:49px}
.panel{margin:0 9px 0 7px;height:423px;border:1px solid #dcdcdc;background:#fff;display:flex;justify-content:space-between;padding:10px 10px 0}
.settings{width:219px}
.settings h3{font:inherit;margin:0;display:flex;align-items:center;gap:2px}
.settings h3::after{content:"";flex:1;height:1px;background:#a0a0a0}
.settings h3.ctl{margin-top:10px}
.pair{display:flex;gap:6px}
.field{display:flex;flex-direction:column;gap:2px;padding:8px 0 0 8px}
.field label{white-space:nowrap}
.narrow{width:153px;flex:none}
.indent{flex:1;min-width:0;padding-left:0}
.dsel{position:relative;height:23px;border:1px solid #adadad;background:#e1e1e1}
.dsel select{padding-left:3px;display:block}
.dsel::after{content:"";position:absolute;right:5px;top:8px;border:4px solid transparent;border-top-color:#000;border-bottom:0}
.spin{display:flex;height:23px;border:1px solid #7a7a7a;background:#fff;padding:1px;align-items:center}
.spin input{flex:1;min-width:0;padding-left:2px}
.ind{border-color:#ccc;background:#f0f0f0}
.ud{width:14px;height:19px;background:#f0f0f0;border:1px solid #bbb;display:flex;flex-direction:column;align-items:center;justify-content:space-around}
.ud::before,.ud::after{content:"";border:3px solid transparent}
.ud::before{border-bottom-color:currentColor;border-top:0}
.ud::after{border-top-color:currentColor;border-bottom:0}
.checks{display:flex;flex-direction:column;gap:8px;padding:9px 0 17px 8px}
.checks label,.vtext{display:flex;align-items:center;gap:5px}
input[type=checkbox]{appearance:none;width:13px;height:13px;border:1px solid #333;background:#fff;flex:none}
input[type=checkbox]:disabled{border-color:#ccc}
.orient{width:117px;height:224px;margin:0;border:1px solid #dcdcdc;padding:9px 7px 0 7px;color:#000}
.orient legend{padding:0 2px}
.dials{display:flex;gap:5px;align-items:center}
.vert{width:25px;height:121px;border:1px solid #adadad;background:#e1e1e1;margin-left:1px}
.dial{width:70px;height:123px}
.dial text{font-size:12px;fill:#000;stroke:none}
.deg{display:flex;align-items:center;gap:6px;margin:12px 0 14px}
.deg .spin{width:48px}
.dfoot{display:flex;align-items:center;height:46px;padding:0 8px 0 11px;gap:5px}
.dfoot a{color:#4a90f5;text-decoration:none}
.dfoot button{width:77px;height:30px;border:1px solid #adadad;background:#e1e1e1}
.dfoot .ok{border:2px solid #0078d7;margin-right:3px}
.mark{position:absolute;border:3px solid #fe0000;box-shadow:3px 3px 5px rgba(0,0,0,.6),inset 3px 3px 5px rgba(0,0,0,.4)}
.mark-wrap{left:9px;top:203px;width:122px;height:40px}
.mark-ok{left:246px;top:456px;width:124px;height:73px}

/* floating overlays */
.brand{position:absolute;right:2px;bottom:5px;width:473px;height:114px;background:rgba(255,255,255,.6);display:flex;justify-content:space-between;padding:0 7px 0 12px}
.words{display:flex;flex-direction:column;white-space:nowrap}
.cn{font-size:49px;line-height:60px;font-weight:900;color:#f91f1d}
.url{font:38px/54px "Liberation Serif",serif;color:#1f74f2;-webkit-text-stroke:1px #1f74f2}
.tag{width:190px;border-radius:24px;background:#257ffa;color:#f6faf9;font:600 90px/108px "Open Sans",sans-serif;text-align:center}
.speed{position:absolute;right:258px;bottom:51px;width:68px;height:42px;color:#f4f5f5;padding:1px 0 0 10px}
.speed::before,.gauge::before{content:"";position:absolute;inset:0;mix-blend-mode:multiply;background:#b9b7bb}
.speed::before{border-radius:21px 0 0 21px}
.speed span{display:block;position:relative;height:20px;line-height:20px}
.speed small,.speed b{font-weight:400;color:#f4f5f5}
.speed small{font-size:10px}
.speed .upc{color:#9fdcff;opacity:.6}.speed .dnc{color:#8fe08f}
.gauge{position:absolute;right:208px;bottom:43px;width:58px;height:58px;color:#f4f5f5;font-size:22px;line-height:58px;text-align:center}
.gauge::before{border-radius:50%;background:#bcbcbe;box-shadow:inset 0 0 0 3px #b0b0b2,inset 0 0 0 5px #cfd8bd}
.gauge span{position:relative;opacity:.8}
.gauge small{font-size:10px}
.brand2{position:absolute;right:10px;bottom:8px;display:flex;gap:4px;color:#1a5fd0;opacity:.35;align-items:center}
.brand2 span{display:block}
.b2cn{font-size:20px;line-height:24px;font-weight:700}
.b2url{font:700 16px/18px "Noto Sans",sans-serif}
```
FILE: app.js
```js
// Pads the data rows to the full column count and appends the empty rows.
const COLS = 15, LAST = 32;
const body = document.getElementById('rows');
for (let n = body.rows.length + 1; n <= LAST; n++) {
  const tr = body.insertRow();
  tr.className = 'h22';
  const th = document.createElement('th');
  th.textContent = n;
  tr.append(th);
}
for (const tr of body.rows) {
  while (tr.cells.length <= COLS) tr.insertCell();
}
```
